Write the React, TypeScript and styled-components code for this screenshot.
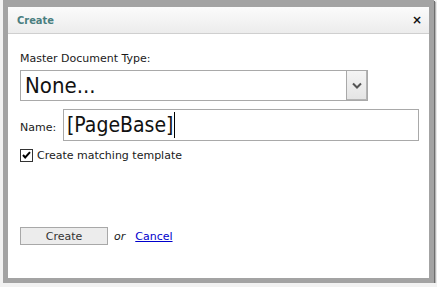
import styled, { createGlobalStyle } from "styled-components";

const GlobalStyle = createGlobalStyle`
  html, body {
    margin: 0;
    padding: 0;
    background: #f2f2f2;
  }
  body {
    padding-left: 3px;
    font-family: "DejaVu Sans", sans-serif;
  }
`;

const Dialog = styled.div`
  width: 421px;
  height: 271px;
  display: flex;
  flex-direction: column;
  background: #ffffff;
  border: 5px solid #a3a3a3;
  border-top-width: 7px;
  box-shadow: 1px 1px 0 #6e6e6e, 2px 2px 1px rgba(0, 0, 0, 0.25);
`;

const Header = styled.div`
  height: 26px;
  display: flex;
  align-items: center;
  justify-content: space-between;
  padding: 0 7px 0 9px;
  background: linear-gradient(#fbfbfb, #ececec);
  border-bottom: 1px solid #cfcfcf;
`;

const Title = styled.span`
  font-family: "DejaVu Sans Condensed", "DejaVu Sans", sans-serif;
  font-size: 11px;
  font-weight: bold;
  color: #4a7e7f;
`;

const Close = styled.span`
  font-size: 12px;
  font-weight: bold;
  color: #111;
  line-height: 1;
`;

const Body = styled.div`
  display: flex;
  flex-direction: column;
  padding: 18px 0 0 12px;
  font-size: 11px;
  color: #1a1a1a;
`;

const Label = styled.div`
  height: 14px;
  line-height: 14px;
`;

const Select = styled.div`
  margin-top: 4px;
  width: 346px;
  height: 29px;
  display: flex;
  border: 1px solid #a9a9a9;
`;

const SelectValue = styled.div`
  flex: 1;
  padding-left: 4px;
  font-family: "DejaVu Sans Condensed", "DejaVu Sans", sans-serif;
  font-size: 22px;
  line-height: 29px;
  color: #111;
`;

const SelectButton = styled.div`
  width: 20px;
  display: flex;
  align-items: center;
  justify-content: center;
  background: linear-gradient(#f4f4f4, #e4e4e4);
  border-left: 1px solid #a9a9a9;
  box-shadow: inset -1px -1px 0 #b4b4b4;
`;

const NameRow = styled.div`
  margin-top: 8px;
  display: flex;
  align-items: center;
`;

const NameLabel = styled.span`
  width: 43px;
  padding-top: 4px;
`;

const Input = styled.div`
  display: flex;
  align-items: center;
  padding-left: 3px;
  box-sizing: border-box;
  width: 356px;
  height: 32px;
  border: 1px solid #a9a9a9;
  font-family: "DejaVu Sans Condensed", "DejaVu Sans", sans-serif;
  font-size: 21px;
  color: #111;
`;

const Caret = styled.span`
  display: inline-block;
  width: 1px;
  height: 26px;
  margin-left: 1px;
  background: #000;
`;

const CheckRow = styled.label`
  margin-top: 7px;
  display: flex;
  align-items: center;
  gap: 4px;
  height: 14px;
`;

const ButtonRow = styled.div`
  margin-top: 65px;
  display: flex;
  align-items: center;
`;

const Button = styled.button`
  width: 88px;
  height: 18px;
  padding: 0;
  background: #ececec;
  border: 1px solid #a8a8a8;
  font-family: inherit;
  font-size: 11px;
  color: #333;
`;

const Or = styled.span`
  margin-left: 6px;
  font-style: italic;
`;

const Link = styled.a`
  margin-left: 10px;
  color: #0000cc;
  text-decoration: underline;
`;

const Chevron = () => (
  <svg width="10" height="7" viewBox="0 0 10 7">
    <path d="M1 1.5 L5 5.5 L9 1.5" fill="none" stroke="#555" strokeWidth="2" />
  </svg>
);

const CheckBox = () => (
  <svg width="13" height="13" viewBox="0 0 13 13">
    <rect x="0.5" y="0.5" width="12" height="12" fill="#fff" stroke="#333" />
    <path d="M3 6 L5.2 8.5 L10 3.2" fill="none" stroke="#000" strokeWidth="2" />
  </svg>
);

export default function App() {
  return (
    <>
      <GlobalStyle />
      <Dialog>
        <Header>
          <Title>Create</Title>
          <Close>×</Close>
        </Header>
        <Body>
          <Label>Master Document Type:</Label>
          <Select>
            <SelectValue>None...</SelectValue>
            <SelectButton>
              <Chevron />
            </SelectButton>
          </Select>
          <NameRow>
            <NameLabel>Name:</NameLabel>
            <Input>
              [PageBase]
              <Caret />
            </Input>
          </NameRow>
          <CheckRow>
            <CheckBox />
            Create matching template
          </CheckRow>
          <ButtonRow>
            <Button>Create</Button>
            <Or>or</Or>
            <Link href="#">Cancel</Link>
          </ButtonRow>
        </Body>
      </Dialog>
    </>
  );
}
